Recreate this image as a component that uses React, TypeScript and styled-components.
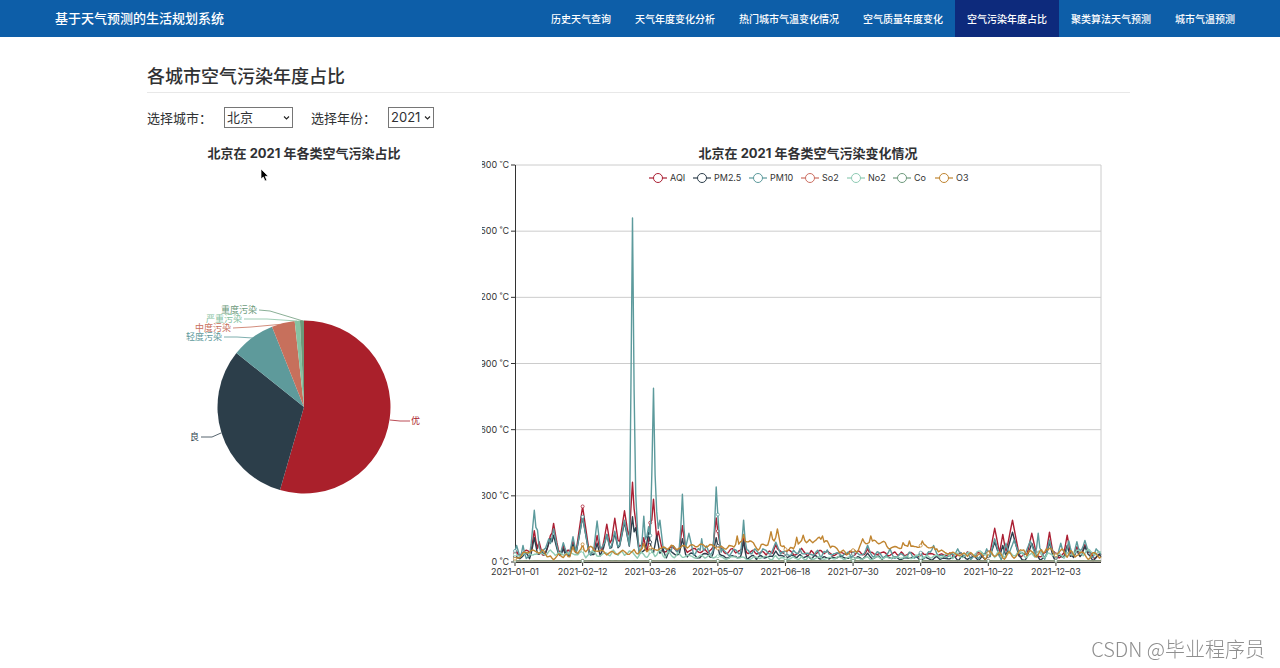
import React from "react";
import styled, { createGlobalStyle } from "styled-components";

const GlobalStyle = createGlobalStyle`
  * { box-sizing: border-box; }
  body {
    margin: 0;
    background: #fff;
    color: #303133;
    font-family: Inter, "Noto Sans CJK SC", sans-serif;
    font-size: 13px;
  }
`;

const Header = styled.header`
  display: flex;
  justify-content: space-between;
  align-items: stretch;
  height: 37px;
  padding: 0 33px 0 55px;
  background: #0d5ea8;
  color: #fff;
`;

const Brand = styled.a`
  display: flex;
  align-items: center;
  padding-bottom: 2px;
  color: inherit;
  text-decoration: none;
  font-size: 13px;
  font-weight: 500;
  white-space: nowrap;
`;

const Nav = styled.nav`
  display: flex;
`;

const NavLink = styled.a<{ $active?: boolean }>`
  display: flex;
  align-items: center;
  padding: 0 12px;
  background: ${(p) => (p.$active ? "#0d2a7c" : "transparent")};
  color: #fff;
  font-size: 10px;
  font-weight: 500;
  text-decoration: none;
  white-space: nowrap;
`;

const Main = styled.main`
  padding: 27px 146px 0 147px;
`;

const PageTitle = styled.h1`
  margin: 0 4px 0 0;
  padding-bottom: 2px;
  border-bottom: 1px solid #e8e8e8;
  font-size: 18px;
  line-height: 26px;
  font-weight: 500;
`;

const Filters = styled.form`
  display: flex;
  align-items: center;
  gap: 18px;
  margin-top: 14px;
`;

const Field = styled.label`
  display: flex;
  align-items: center;
  gap: 12px;
  white-space: nowrap;
`;

const SelectBox = styled.span<{ $width: number }>`
  display: flex;
  position: relative;
  width: ${(p) => p.$width}px;
`;

const Select = styled.select`
  appearance: none;
  width: 100%;
  height: 21px;
  margin: 0;
  padding: 0 2px;
  border: 1px solid #767676;
  border-radius: 0;
  background: #fff;
  color: #303133;
  font: inherit;
  line-height: 19px;
`;

const Chevron = styled.svg`
  position: absolute;
  right: 3px;
  top: 8px;
  pointer-events: none;
`;

const Charts = styled.div`
  display: grid;
  grid-template-columns: 314fr 652fr;
  gap: 21px;
  margin-top: 18px;
`;

const Panel = styled.section`
  position: relative;
  min-width: 0;
`;

const PanelTitle = styled.h2`
  margin: 0;
  font-size: 13px;
  line-height: 15px;
  font-weight: 700;
  text-align: center;
`;

const Drawing = styled.svg`
  display: block;
  width: 100%;
  height: auto;
  font-size: 9px;
`;

const Pointer = styled.svg`
  position: absolute;
  left: 113px;
  top: 22px;
`;

const Watermark = styled.div`
  position: fixed;
  right: 15px;
  bottom: 5px;
  color: #8e8e8e;
  font-family: "Noto Sans CJK SC", sans-serif;
  font-size: 20px;
  font-weight: 300;
  line-height: 28px;
`;

const navItems = [
  "历史天气查询",
  "天气年度变化分析",
  "热门城市气温变化情况",
  "空气质量年度变化",
  "空气污染年度占比",
  "聚类算法天气预测",
  "城市气温预测",
];

/* ---------- pie ---------- */

const CX = 157;
const CY = 246;
const R = 86.5;

const slices = [
  { name: "优", from: 0, to: 196.1, color: "#aa202b", line: "243,259 253,260 263,260", x: 264, y: 263, end: false },
  { name: "良", from: 196.1, to: 308.6, color: "#2c3e4a", line: "74,272 65,276 54,276", x: 52, y: 279, end: true },
  { name: "轻度污染", from: 308.6, to: 338.3, color: "#5e9a9b", line: "106,177 90,176 77,176", x: 75, y: 179, end: true },
  { name: "中度污染", from: 338.3, to: 353.8, color: "#c7705c", line: "137,163 104,166 86,167", x: 84, y: 170, end: true },
  { name: "严重污染", from: 353.8, to: 357.3, color: "#86c2a2", line: "150,160 120,158 97,158", x: 95, y: 161, end: true },
  { name: "重度污染", from: 357.3, to: 360, color: "#6c9a7b", line: "156,160 123,150 112,149", x: 110, y: 152, end: true },
];

const onCircle = (deg: number) => {
  const a = (deg * Math.PI) / 180;
  return `${(CX + R * Math.sin(a)).toFixed(2)} ${(CY - R * Math.cos(a)).toFixed(2)}`;
};

const PieChart = () => (
  <Drawing viewBox="0 0 314 425" role="img" aria-label="各类空气污染占比">
    {slices.map((s) => (
      <path
        key={s.name}
        d={`M${CX} ${CY}L${onCircle(s.from)}A${R} ${R} 0 ${s.to - s.from > 180 ? 1 : 0} 1 ${onCircle(s.to)}Z`}
        fill={s.color}
      />
    ))}
    {slices.map((s) => (
      <g key={s.name}>
        <polyline points={s.line} fill="none" stroke={s.color} strokeWidth={0.8} />
        <text x={s.x} y={s.y} textAnchor={s.end ? "end" : "start"} fill={s.color}>
          {s.name}
        </text>
      </g>
    ))}
  </Drawing>
);

/* ---------- daily lines ---------- */

const DAYS = 365;
const LEFT = 33;
const RIGHT = 619;
const TOP = 4;
const BOTTOM = 401;
const STEP = (RIGHT - LEFT) / (DAYS - 1);

type Pair = [number, number];
type Peak = [number, number, number];

const noise = (seed: number) => {
  let s = seed;
  return () => {
    s = (s * 1664525 + 1013904223) % 4294967296;
    return s / 4294967296;
  };
};

const level = (knots: Pair[], day: number) => {
  let i = 1;
  while (i < knots.length - 1 && knots[i][0] < day) i++;
  const [d0, v0] = knots[i - 1];
  const [d1, v1] = knots[i];
  return v0 + ((v1 - v0) * (day - d0)) / (d1 - d0);
};

// Level and swing are knots over the year; each peak is [day, value, half width in days].
const build = (seed: number, knots: Pair[], swing: Pair[], peaks: Peak[]) => {
  const rnd = noise(seed);
  let from = 0;
  let to = rnd() * 2 - 1;
  let start = 0;
  let span = 3;
  return Array.from({ length: DAYS }, (_, day) => {
    if (day - start >= span) {
      start = day;
      span = 2 + Math.floor(rnd() * 3);
      from = to;
      to = (to > 0 ? -1 : 1) * (0.15 + rnd() * 0.85);
    }
    const t = (1 - Math.cos((Math.PI * (day - start)) / span)) / 2;
    const wave = from + (to - from) * t + (rnd() - 0.5) * 0.3;
    let v = level(knots, day) + wave * level(swing, day);
    peaks.forEach(([d, top, w]) => {
      v = Math.max(v, top * (1 - Math.abs(day - d) / w));
    });
    return Math.max(5, v);
  });
};

const pm10Peaks: Peak[] = [
  [1, 75, 3], [5, 75, 2], [12, 235, 3], [14, 144, 2], [21, 105, 5], [24, 150, 4], [30, 88, 3], [36, 115, 3],
  [42, 205, 5], [51, 186, 3], [57, 125, 4], [62, 140, 4], [68, 190, 5], [73, 1560, 2], [75, 310, 2],
  [80, 208, 2], [83, 160, 4], [86, 788, 2], [88, 227, 3], [90, 190, 3], [104, 307, 2], [108, 130, 4],
  [116, 105, 2], [125, 340, 2], [126, 215, 2], [142, 190, 2], [154, 60, 4], [162, 90, 5], [177, 60, 3],
  [194, 55, 3], [219, 76, 4], [233, 60, 3], [260, 75, 4], [275, 60, 4], [293, 60, 3], [298, 105, 4],
  [305, 85, 3], [310, 100, 5], [320, 95, 5], [325, 130, 2], [332, 100, 3], [339, 85, 3], [344, 95, 3], [349, 92, 3],
  [354, 98, 4], [361, 60, 3],
];

const pm25Peaks: Peak[] = [
  [12, 110, 3], [22, 105, 5], [24, 122, 4], [30, 60, 3], [36, 80, 3], [42, 203, 5], [51, 85, 3],
  [57, 125, 4], [62, 130, 4], [68, 180, 5], [73, 205, 3], [75, 155, 3], [83, 135, 3], [88, 120, 3],
  [104, 105, 3], [125, 110, 3], [142, 95, 2], [162, 50, 4], [219, 40, 4], [298, 90, 4], [303, 75, 3],
  [309, 135, 5], [321, 85, 4], [332, 90, 3], [343, 75, 3], [349, 55, 3], [354, 70, 4],
];

const aqiPeaks: Peak[] = [
  [1, 50, 3], [12, 142, 3], [15, 92, 3], [22, 120, 4], [24, 175, 4], [30, 75, 3], [36, 95, 3],
  [42, 252, 5], [51, 120, 3], [57, 172, 4], [62, 198, 4], [68, 232, 5], [73, 362, 3], [75, 185, 3],
  [80, 110, 3], [84, 178, 2], [86, 285, 3], [89, 140, 4], [104, 165, 3], [125, 200, 3], [126, 140, 3],
  [142, 120, 2], [162, 80, 4], [178, 62, 4], [219, 60, 4], [298, 153, 4], [303, 125, 3], [309, 190, 5],
  [321, 130, 4], [332, 135, 3], [343, 122, 3], [349, 70, 3], [354, 80, 4],
];

const series = [
  {
    name: "AQI", color: "#ab1f33", x: 166,
    data: build(11, [[0, 40], [60, 45], [80, 60], [150, 45], [260, 35], [364, 30]],
      [[0, 16], [90, 16], [150, 14], [240, 14], [364, 18]], aqiPeaks),
  },
  {
    name: "PM2.5", color: "#2d3f4c", x: 210,
    data: build(23, [[0, 25], [70, 35], [85, 45], [130, 25], [260, 17], [364, 20]],
      [[0, 18], [90, 22], [150, 12], [240, 9], [364, 16]], pm25Peaks),
  },
  {
    name: "PM10", color: "#5c9a9c", x: 266,
    data: build(37, [[0, 35], [80, 65], [140, 45], [170, 38], [260, 28], [364, 35]],
      [[0, 28], [90, 34], [150, 20], [240, 18], [364, 28]], pm10Peaks),
  },
  { name: "So2", color: "#cc6f62", x: 318, data: build(41, [[0, 5], [364, 5]], [[0, 1], [364, 1]], []) },
  {
    name: "No2", color: "#8fcbb4", x: 364,
    data: build(53, [[0, 36], [60, 38], [90, 36], [120, 20], [220, 16], [290, 34], [364, 38]],
      [[0, 20], [90, 20], [130, 10], [240, 9], [290, 20], [364, 24]], []),
  },
  { name: "Co", color: "#6e9a7d", x: 410, data: build(67, [[0, 5], [364, 5]], [[0, 0], [364, 0]], []) },
  {
    name: "O3", color: "#c08531", x: 452,
    data: build(
      79,
      [[0, 15], [10, 50], [18, 50], [22, 22], [34, 25], [42, 60], [60, 42], [70, 38], [80, 55], [95, 65], [120, 75],
        [132, 65], [144, 100], [152, 62], [162, 95], [166, 65], [170, 58], [182, 95], [190, 102], [198, 60], [206, 40],
        [212, 55], [216, 90], [226, 90], [236, 65], [248, 65], [254, 80], [264, 45], [285, 32], [310, 35], [326, 40],
        [364, 30]],
      [[0, 12], [60, 18], [90, 12], [140, 14], [200, 16], [250, 14], [270, 12], [300, 24], [364, 24]],
      [[36, 70, 3], [42, 80, 3], [80, 85, 3], [138, 118, 3], [142, 125, 3], [159, 138, 4], [163, 150, 4], [175, 112, 3],
        [179, 122, 5], [191, 118, 4], [216, 105, 5], [221, 118, 4], [241, 88, 3], [245, 95, 4], [253, 95, 4],
        [262, 60, 3], [316, 55, 4], [330, 60, 4]],
    ),
  },
];

const px = (day: number) => LEFT + day * STEP;
const py = (value: number) => BOTTOM - (value * (BOTTOM - TOP)) / 1800;

const yTicks = [0, 300, 600, 900, 1200, 1500, 1800];
const dates = [
  "2021–01–01", "2021–02–12", "2021–03–26", "2021–05–07", "2021–06–18",
  "2021–07–30", "2021–09–10", "2021–10–22", "2021–12–03",
];

const LineChart = () => (
  <Drawing viewBox="0 0 652 425" role="img" aria-label="各类空气污染变化情况">
    {yTicks.map((v) => (
      <g key={v}>
        <line x1={LEFT} x2={RIGHT} y1={py(v)} y2={py(v)} stroke="#ccc" />
        <line x1={LEFT - 4} x2={LEFT} y1={py(v)} y2={py(v)} stroke="#333" />
        <text x={27} y={py(v) + 3} textAnchor="end" fill="#333">
          {v} ˚C
        </text>
      </g>
    ))}
    <line x1={RIGHT} x2={RIGHT} y1={TOP} y2={BOTTOM} stroke="#ccc" />
    <path d={`M${LEFT + 0.5} ${TOP}V${BOTTOM + 0.5}H${RIGHT}`} fill="none" stroke="#333" />
    {dates.map((d, i) => (
      <g key={d}>
        <line x1={px(i * 42)} x2={px(i * 42)} y1={BOTTOM} y2={BOTTOM + 4} stroke="#333" />
        <text x={px(i * 42)} y={BOTTOM + 13} textAnchor="middle" fill="#333">
          {d}
        </text>
      </g>
    ))}
    {series.map((s) => (
      <g key={s.name} stroke={s.color} fill="none">
        <polyline
          points={s.data.map((v, day) => `${px(day).toFixed(1)},${py(v).toFixed(1)}`).join(" ")}
          strokeWidth={1.4}
          strokeLinejoin="round"
        />
        {dates.map((d, i) => (
          <circle key={d} cx={px(i * 42)} cy={py(s.data[i * 42])} r={1.5} fill="#fff" strokeWidth={0.8} />
        ))}
        <path d={`M${s.x + 1} 17h18`} strokeWidth={1.2} />
        <circle cx={s.x + 10} cy={17} r={4.5} fill="#fff" />
        <text x={s.x + 22} y={20} fill="#333" stroke="none">
          {s.name}
        </text>
      </g>
    ))}
  </Drawing>
);

const Dropdown = ({ id, width, options }: { id: string; width: number; options: string[] }) => (
  <SelectBox $width={width}>
    <Select id={id} defaultValue={options[0]}>
      {options.map((o) => (
        <option key={o}>{o}</option>
      ))}
    </Select>
    <Chevron width="7" height="6" viewBox="0 0 7 6" aria-hidden="true">
      <path d="M1 1.5L3.5 4L6 1.5" fill="none" stroke="#222" strokeWidth="1.1" />
    </Chevron>
  </SelectBox>
);

export default function App() {
  return (
    <>
      <GlobalStyle />
      <Header>
        <Brand href="#">基于天气预测的生活规划系统</Brand>
        <Nav>
          {navItems.map((item) => (
            <NavLink key={item} href="#" $active={item === "空气污染年度占比"}>
              {item}
            </NavLink>
          ))}
        </Nav>
      </Header>
      <Main>
        <PageTitle>各城市空气污染年度占比</PageTitle>
        <Filters>
          <Field htmlFor="city">
            选择城市：
            <Dropdown id="city" width={69} options={["北京", "上海", "广州"]} />
          </Field>
          <Field htmlFor="year">
            选择年份：
            <Dropdown id="year" width={46} options={["2021", "2020", "2019"]} />
          </Field>
        </Filters>
        <Charts>
          <Panel>
            <PanelTitle>北京在 2021 年各类空气污染占比</PanelTitle>
            <PieChart />
            <Pointer width="9" height="14" viewBox="0 0 9 14" aria-hidden="true">
              <path d="M1 1V11L3.3 9L5 13L6.8 12.2L5.2 8.3H8.3Z" fill="#000" stroke="#fff" strokeWidth="0.7" />
            </Pointer>
          </Panel>
          <Panel>
            <PanelTitle>北京在 2021 年各类空气污染变化情况</PanelTitle>
            <LineChart />
          </Panel>
        </Charts>
      </Main>
      <Watermark>CSDN @毕业程序员</Watermark>
    </>
  );
}
